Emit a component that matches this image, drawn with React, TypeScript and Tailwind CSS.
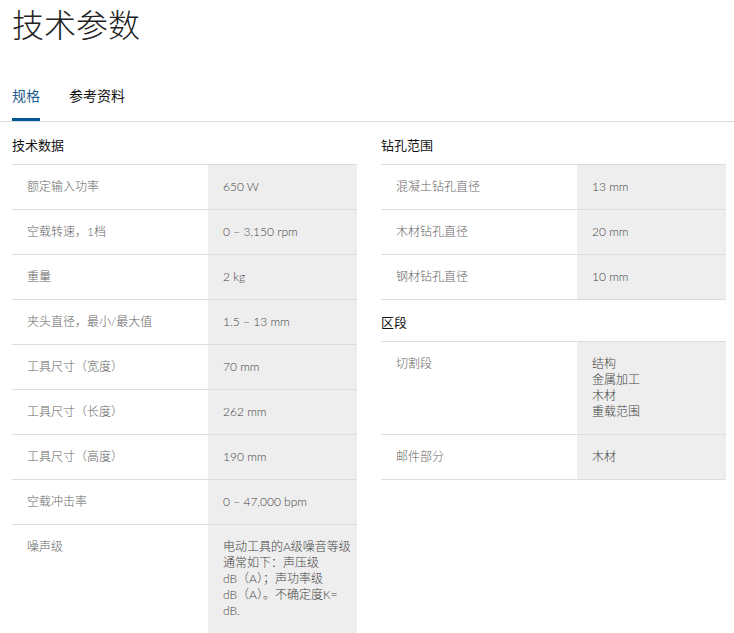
const font = {
  fontFamily: '"Lato", "Noto Sans CJK SC", sans-serif',
};

type Row = { label: string; value: React.ReactNode };

const techData: Row[] = [
  { label: "额定输入功率", value: "650 W" },
  { label: "空载转速，1档", value: "0 – 3,150 rpm" },
  { label: "重量", value: "2 kg" },
  { label: "夹头直径，最小/最大值", value: "1.5 – 13 mm" },
  { label: "工具尺寸（宽度）", value: "70 mm" },
  { label: "工具尺寸（长度）", value: "262 mm" },
  { label: "工具尺寸（高度）", value: "190 mm" },
  { label: "空载冲击率", value: "0 – 47,000 bpm" },
  {
    label: "噪声级",
    value: (
      <>
        电动工具的A级噪音等级
        <br />
        通常如下：声压级
        <br />
        dB（A）；声功率级
        <br />
        dB（A）。不确定度K=
        <br />
        dB.
      </>
    ),
  },
];

const drilling: Row[] = [
  { label: "混凝土钻孔直径", value: "13 mm" },
  { label: "木材钻孔直径", value: "20 mm" },
  { label: "钢材钻孔直径", value: "10 mm" },
];

const segments: Row[] = [
  {
    label: "切割段",
    value: (
      <>
        结构
        <br />
        金属加工
        <br />
        木材
        <br />
        重载范围
      </>
    ),
  },
  { label: "邮件部分", value: "木材" },
];

function SpecTable({
  title,
  rows,
  last,
  top = "pt-[13px]",
}: {
  title: string;
  rows: Row[];
  last?: boolean;
  top?: string;
}) {
  return (
    <div>
      <h3 className={`${top} mb-[9px] text-[13px] leading-5 text-[#111]`}>
        {title}
      </h3>
      <div className={last ? "" : "border-b border-[#dddddd]"}>
        {rows.map((row, i) => (
          <div key={i} className="flex border-t border-[#dddddd] text-[12px] leading-4 font-light">
            <div className="w-[196px] shrink-0 px-[15px] py-[14px] text-[#666666]">
              {row.label}
            </div>
            <div className="flex-1 bg-[#eeeeee] pl-[15px] pr-[6px] py-[14px] text-[#444444] whitespace-nowrap">
              {row.value}
            </div>
          </div>
        ))}
      </div>
    </div>
  );
}

export default function App() {
  return (
    <div className="w-[734px] h-[633px] overflow-hidden bg-white" style={font}>
      <div className="px-3 pt-[5px]">
        <h1 className="text-[32px] leading-[40px] font-light text-[#222]">技术参数</h1>
      </div>

      <div className="mt-[41px] flex gap-[29px] border-b border-[#dddddd] px-3 text-[14px] leading-5">
        <button className="pb-[12px] border-b-[3px] border-[#005691] text-[#1d5a8e]">
          规格
        </button>
        <button className="pb-[12px] border-b-[3px] border-transparent text-[#111]">
          参考资料
        </button>
      </div>

      <div className="w-[714px] ml-3 grid grid-cols-2 gap-6 items-start">
        <SpecTable title="技术数据" rows={techData} last />
        <div>
          <SpecTable title="钻孔范围" rows={drilling} />
          <SpecTable title="区段" rows={segments} top="pt-[12px]" />
        </div>
      </div>
    </div>
  );
}
